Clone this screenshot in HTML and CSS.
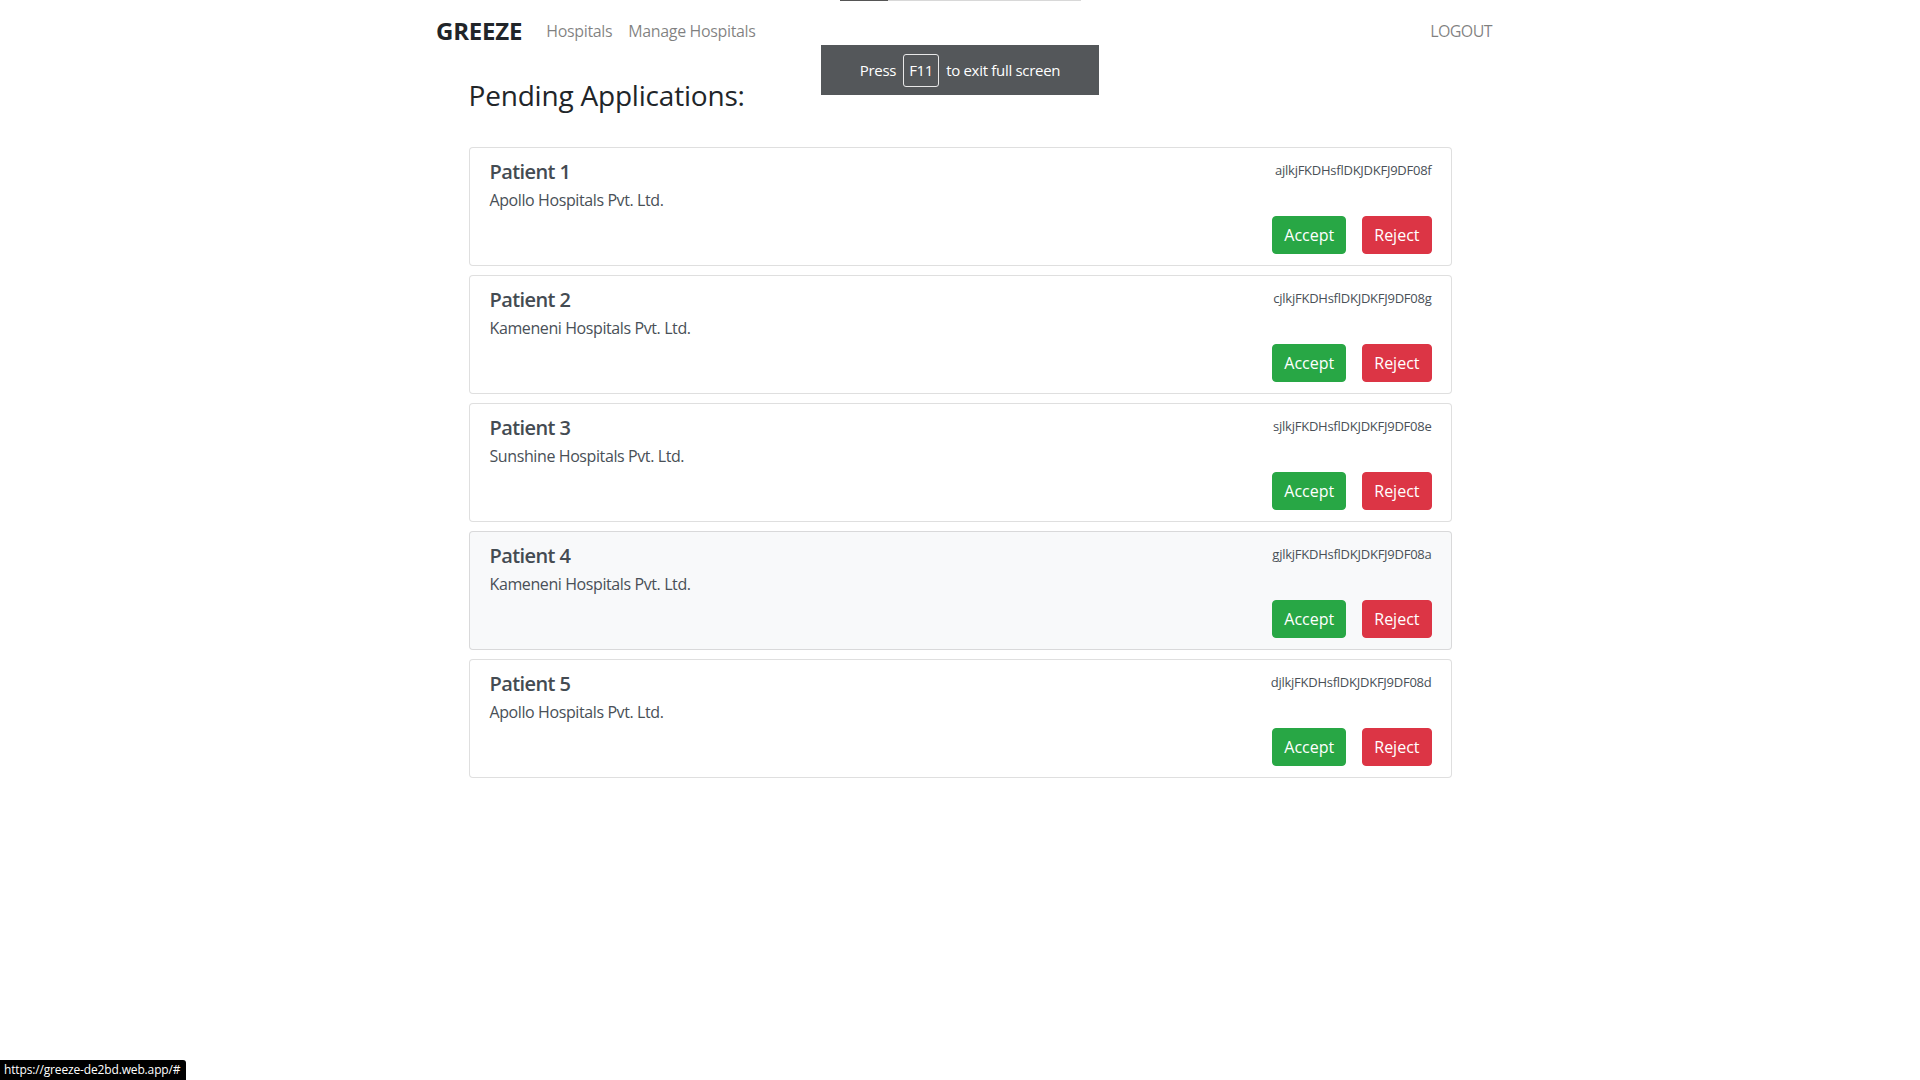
FILE: index.html
```html
<!DOCTYPE html>
<html lang="en">
<head>
<meta charset="utf-8">
<title>Greeze</title>
<link rel="stylesheet" href="styles.css">
</head>
<body>
<div class="fs-bar"><span class="fs-bar-dark"></span><span class="fs-bar-light"></span></div>
<nav class="navbar">
  <a class="brand" href="#">GREEZE</a>
  <a class="nav-link" href="#">Hospitals</a>
  <a class="nav-link" href="#">Manage Hospitals</a>
  <a class="nav-link logout" href="#">LOGOUT</a>
</nav>
<main class="container">
  <h2 class="page-title">Pending Applications:</h2>
  <div class="card">
    <div class="card-head"><h5 class="card-title">Patient 1</h5><span class="card-id">ajlkjFKDHsflDKJDKFJ9DF08f</span></div>
    <p class="card-sub">Apollo Hospitals Pvt. Ltd.</p>
    <div class="card-actions"><button class="btn btn-accept">Accept</button><button class="btn btn-reject">Reject</button></div>
  </div>
  <div class="card">
    <div class="card-head"><h5 class="card-title">Patient 2</h5><span class="card-id">cjlkjFKDHsflDKJDKFJ9DF08g</span></div>
    <p class="card-sub">Kameneni Hospitals Pvt. Ltd.</p>
    <div class="card-actions"><button class="btn btn-accept">Accept</button><button class="btn btn-reject">Reject</button></div>
  </div>
  <div class="card">
    <div class="card-head"><h5 class="card-title">Patient 3</h5><span class="card-id">sjlkjFKDHsflDKJDKFJ9DF08e</span></div>
    <p class="card-sub">Sunshine Hospitals Pvt. Ltd.</p>
    <div class="card-actions"><button class="btn btn-accept">Accept</button><button class="btn btn-reject">Reject</button></div>
  </div>
  <div class="card card-hover">
    <div class="card-head"><h5 class="card-title">Patient 4</h5><span class="card-id">gjlkjFKDHsflDKJDKFJ9DF08a</span></div>
    <p class="card-sub">Kameneni Hospitals Pvt. Ltd.</p>
    <div class="card-actions"><button class="btn btn-accept">Accept</button><button class="btn btn-reject">Reject</button></div>
  </div>
  <div class="card">
    <div class="card-head"><h5 class="card-title">Patient 5</h5><span class="card-id">djlkjFKDHsflDKJDKFJ9DF08d</span></div>
    <p class="card-sub">Apollo Hospitals Pvt. Ltd.</p>
    <div class="card-actions"><button class="btn btn-accept">Accept</button><button class="btn btn-reject">Reject</button></div>
  </div>
</main>
<div class="fs-toast">Press <span class="key">F11</span> to exit full screen</div>
<div class="status-url">https://greeze-de2bd.web.app/#</div>
</body>
</html>
```
FILE: styles.css
```css
html, body {
  margin: 0;
  padding: 0;
  background: #ffffff;
}
body {
  font-family: "Open Sans", "Noto Sans", sans-serif;
  color: #212529;
  font-size: 16px;
  line-height: 1.5;
  min-height: 1080px;
}
a { text-decoration: none; }

.fs-bar {
  position: absolute;
  top: 0;
  left: 840px;
  display: flex;
  height: 1px;
}
.fs-bar-dark { width: 48px; background: #555; }
.fs-bar-light { width: 193px; background: #d8d8d8; }

.navbar {
  display: flex;
  align-items: center;
  padding: 13px 428px 10px 436px;
}
.brand {
  font-size: 24px;
  font-weight: 700;
  line-height: 36px;
  color: #212529;
  margin-right: 24px;
  letter-spacing: -0.2px;
}
.nav-link {
  font-size: 16px;
  line-height: 24px;
  color: rgba(0, 0, 0, 0.5);
  margin-right: 16px;
  letter-spacing: -0.35px;
}
.logout { margin-left: auto; margin-right: 0; letter-spacing: -0.6px; }

.container {
  width: 983px;
  margin: 0 auto;
}
.page-title {
  margin: 20px 0 34px 0;
  font-size: 28px;
  font-weight: 500;
  line-height: 1.2;
  letter-spacing: -0.2px;
}

.card {
  border: 1px solid rgba(0, 0, 0, 0.125);
  border-radius: 4px;
  padding: 12px 19px 11px 20px;
  margin-bottom: 9px;
  background: #fff;
}
.card-hover { background: #f8f9fa; }
.card-head {
  display: flex;
  justify-content: space-between;
  align-items: flex-start;
}
.card-title {
  margin: 0 0 4px;
  font-size: 20px;
  font-weight: 600;
  line-height: 24px;
  color: #444b52;
  letter-spacing: -0.6px;
}
.card-id {
  font-size: 13px;
  line-height: 20px;
  color: #495057;
  letter-spacing: -0.25px;
}
.card-sub {
  margin: 0;
  font-size: 16px;
  line-height: 24px;
  color: #495057;
  letter-spacing: -0.4px;
}
.card-actions {
  display: flex;
  justify-content: flex-end;
  gap: 16px;
  margin-top: 4px;
}
.btn {
  font-family: inherit;
  font-size: 16px;
  line-height: 24px;
  padding: 6px 11px;
  border: 1px solid transparent;
  border-radius: 4px;
  color: #fff;
  cursor: pointer;
}
.btn-accept { background: #28a745; border-color: #28a745; }
.btn-reject { background: #dc3545; border-color: #dc3545; }

.fs-toast {
  position: absolute;
  top: 45px;
  left: 821px;
  width: 278px;
  height: 50px;
  box-sizing: border-box;
  background: #54575a;
  color: #fff;
  font-size: 15px;
  letter-spacing: -0.3px;
  display: flex;
  align-items: center;
  justify-content: center;
  gap: 7px;
}
.key {
  display: inline-flex;
  align-items: center;
  justify-content: center;
  width: 36px;
  height: 33px;
  box-sizing: border-box;
  border: 1px solid #e8e8e8;
  border-radius: 3px;
}

.status-url {
  position: fixed;
  left: 0;
  bottom: 0;
  height: 20px;
  padding: 0 6px 0 4px;
  background: #000;
  color: #fff;
  font-size: 12px;
  line-height: 20px;
  letter-spacing: -0.15px;
  border-top-right-radius: 3px;
}
```
